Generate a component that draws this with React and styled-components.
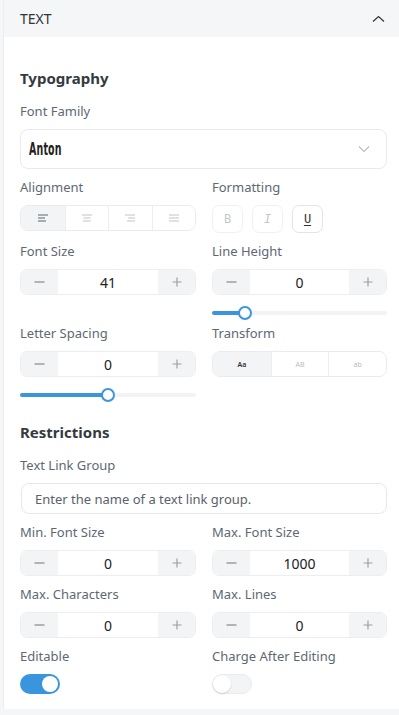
import React from "react";
import styled, { createGlobalStyle } from "styled-components";

const GlobalStyle = createGlobalStyle`
    * { box-sizing: border-box; }
    html, body {
        margin: 0;
        padding: 0;
        background: #f5f6f8;
        font-family: "Noto Sans", "Open Sans", sans-serif;
    }
`;

const Panel = styled.div`
    margin-left: 3px;
    width: 396px;
    border-left: 1px solid #eceef1;
    background: #fff;
`;

const Header = styled.div`
    height: 37px;
    padding: 0 14px 0 16px;
    display: flex;
    align-items: center;
    justify-content: space-between;
    background: #f4f6f8;
    font-size: 14px;
    color: #333;
    text-transform: uppercase;
`;

const Body = styled.div`
    padding: 31px 12px 15px 16px;
    display: flex;
    flex-direction: column;
`;

const SectionTitle = styled.h3`
    margin: ${(p) => p.$mt || 0}px 0 14px;
    font-size: 15px;
    line-height: 20px;
    font-weight: 700;
    color: #343a40;
`;

const Row = styled.div`
    display: grid;
    grid-template-columns: 176px 175px;
    column-gap: 16px;
    align-items: start;
    margin-top: ${(p) => p.$mt ?? 9}px;
`;

const Field = styled.div`
    display: flex;
    flex-direction: column;
    gap: 9px;
    margin-top: ${(p) => p.$mt ?? 0}px;
`;

const Label = styled.div`
    font-size: 13px;
    line-height: 18px;
    color: #5e6873;
`;

const Select = styled.div`
    height: 40px;
    border: 1px solid #e8eaed;
    border-radius: 8px;
    padding: 0 8px 0 8px;
    display: flex;
    align-items: center;
    justify-content: space-between;
`;

const AntonText = styled.span`
    display: inline-block;
    font-family: "DejaVu Sans Condensed", "DejaVu Sans", sans-serif;
    font-weight: 700;
    font-size: 17.5px;
    color: #222;
    transform: scaleX(0.6);
    transform-origin: left center;
    letter-spacing: 0.3px;
`;

const Segmented = styled.div`
    height: 26px;
    display: grid;
    grid-template-columns: repeat(${(p) => p.$count}, 1fr);
    border: 1px solid #e9ebee;
    border-radius: 8px;
    overflow: hidden;
`;

const Segment = styled.div`
    display: flex;
    align-items: center;
    justify-content: center;
    background: ${(p) => (p.$active ? "#f3f4f6" : "#fff")};
    border-left: ${(p) => (p.$first ? "none" : "1px solid #eceef1")};
    color: ${(p) => (p.$active ? "#333" : "#b8bdc2")};
    font-size: 7px;
    font-weight: ${(p) => (p.$active ? 600 : 400)};
`;

const FormatGroup = styled.div`
    display: flex;
    gap: 9px;
`;

const FormatButton = styled.div`
    width: 31px;
    height: 28px;
    border-radius: 7px;
    border: 1px solid ${(p) => (p.$active ? "#e2e5e8" : "#eff1f3")};
    display: flex;
    align-items: center;
    justify-content: center;
    font-family: "DejaVu Sans Mono", monospace;
    font-size: 12px;
    color: ${(p) => (p.$active ? "#333" : "#c4c8cc")};
    font-style: ${(p) => (p.$italic ? "oblique" : "normal")};
    text-decoration: ${(p) => (p.$underline ? "underline" : "none")};
    text-underline-offset: 2px;
`;

const Stepper = styled.div`
    height: 26px;
    display: grid;
    grid-template-columns: 37px 1fr 37px;
    border: 1px solid #eceef1;
    border-radius: 7px;
    overflow: hidden;
`;

const StepButton = styled.div`
    background: #f3f4f6;
    display: flex;
    align-items: center;
    justify-content: center;
`;

const StepValue = styled.div`
    display: flex;
    align-items: center;
    justify-content: center;
    font-size: 14px;
    color: #222;
    background: #fff;
`;

const Track = styled.div`
    position: relative;
    height: 4px;
    margin-top: 7px;
    border-radius: 2px;
    background: #f1f3f5;
`;

const Fill = styled.div`
    height: 100%;
    border-radius: 2px;
    background: #3a96dc;
`;

const Thumb = styled.div`
    position: absolute;
    top: 50%;
    width: 14px;
    height: 14px;
    margin: -7px 0 0 -7px;
    border-radius: 50%;
    background: #fff;
    border: 2px solid #3a96dc;
`;

const TextInput = styled.div`
    height: 31px;
    margin-left: 1px;
    border: 1px solid #e5e7ea;
    border-radius: 8px;
    padding: 0 13px;
    display: flex;
    align-items: center;
    font-size: 13px;
    color: #5a6169;
`;

const Toggle = styled.div`
    width: 40px;
    height: 20px;
    border-radius: 10px;
    padding: 2px;
    display: flex;
    justify-content: ${(p) => (p.$on ? "flex-end" : "flex-start")};
    background: ${(p) => (p.$on ? "#3a96dc" : "#f3f4f6")};
    border: ${(p) => (p.$on ? "none" : "1px solid #eaecef")};
`;

const Knob = styled.div`
    width: ${(p) => (p.$on ? 16 : 18)}px;
    height: ${(p) => (p.$on ? 16 : 18)}px;
    margin: ${(p) => (p.$on ? 0 : "-2px 0 0 -2px")};
    border-radius: 50%;
    background: #fff;
    box-shadow: ${(p) => (p.$on ? "none" : "0 1px 2px rgba(0,0,0,0.15)")};
`;

const ChevronUp = () => (
    <svg width="13" height="8" viewBox="0 0 13 8">
        <polyline points="1,6.5 6.5,1.5 12,6.5" fill="none" stroke="#333" strokeWidth="1.2" />
    </svg>
);

const ChevronDown = () => (
    <svg width="12" height="8" viewBox="0 0 12 8" style={{ marginRight: 8 }}>
        <polyline points="1,1.5 6,6.5 11,1.5" fill="none" stroke="#b8bec4" strokeWidth="1.2" />
    </svg>
);

const alignLines = {
    left: [[0, 10], [0, 7], [0, 8]],
    center: [[0, 10], [1.5, 8.5], [1, 9]],
    right: [[0, 10], [3, 10], [2, 10]],
    justify: [[0, 10], [0, 10], [0, 10]],
};

const AlignIcon = ({ type, active }) => (
    <svg width="10" height="8" viewBox="0 0 10 8">
        {alignLines[type].map(([a, b], i) => (
            <line
                key={i}
                x1={a}
                x2={b}
                y1={1 + i * 3}
                y2={1 + i * 3}
                stroke={active ? "#8c949a" : "#d3d8db"}
                strokeWidth="1.7"
            />
        ))}
    </svg>
);

const Minus = () => (
    <svg width="11" height="10" viewBox="0 0 11 10">
        <line x1="0.5" x2="10.5" y1="5" y2="5" stroke="#9a9fa5" strokeWidth="1.3" />
    </svg>
);

const Plus = () => (
    <svg width="10" height="10" viewBox="0 0 10 10">
        <line x1="0.5" x2="9.5" y1="5" y2="5" stroke="#9a9fa5" strokeWidth="1.2" />
        <line x1="5" x2="5" y1="0.5" y2="9.5" stroke="#9a9fa5" strokeWidth="1.2" />
    </svg>
);

const NumberStepper = ({ value }) => (
    <Stepper>
        <StepButton>
            <Minus />
        </StepButton>
        <StepValue>{value}</StepValue>
        <StepButton>
            <Plus />
        </StepButton>
    </Stepper>
);

const Slider = ({ percent }) => (
    <Track>
        <Fill style={{ width: `${percent}%` }} />
        <Thumb style={{ left: `${percent}%` }} />
    </Track>
);

const App = () => {
    return (
        <>
            <GlobalStyle />
            <Panel>
                <Header>
                    <span>Text</span>
                    <ChevronUp />
                </Header>
                <Body>
                    <SectionTitle>Typography</SectionTitle>
                    <Field>
                        <Label>Font Family</Label>
                        <Select>
                            <AntonText>Anton</AntonText>
                            <ChevronDown />
                        </Select>
                    </Field>
                    <Row>
                        <Field>
                            <Label>Alignment</Label>
                            <Segmented $count={4}>
                                {["left", "center", "right", "justify"].map((t, i) => (
                                    <Segment key={t} $active={i === 0} $first={i === 0}>
                                        <AlignIcon type={t} active={i === 0} />
                                    </Segment>
                                ))}
                            </Segmented>
                        </Field>
                        <Field>
                            <Label>Formatting</Label>
                            <FormatGroup>
                                <FormatButton>B</FormatButton>
                                <FormatButton $italic>I</FormatButton>
                                <FormatButton $active $underline>U</FormatButton>
                            </FormatGroup>
                        </Field>
                    </Row>
                    <Row>
                        <Field>
                            <Label>Font Size</Label>
                            <NumberStepper value="41" />
                        </Field>
                        <Field>
                            <Label>Line Height</Label>
                            <NumberStepper value="0" />
                            <Slider percent={19} />
                        </Field>
                    </Row>
                    <Row>
                        <Field>
                            <Label>Letter Spacing</Label>
                            <NumberStepper value="0" />
                            <Slider percent={50} />
                        </Field>
                        <Field>
                            <Label>Transform</Label>
                            <Segmented $count={3}>
                                <Segment $active $first>Aa</Segment>
                                <Segment>AB</Segment>
                                <Segment>ab</Segment>
                            </Segmented>
                        </Field>
                    </Row>

                    <SectionTitle $mt={25}>Restrictions</SectionTitle>
                    <Field>
                        <Label>Text Link Group</Label>
                        <TextInput>Enter the name of a text link group.</TextInput>
                    </Field>
                    <Row>
                        <Field>
                            <Label>Min. Font Size</Label>
                            <NumberStepper value="0" />
                        </Field>
                        <Field>
                            <Label>Max. Font Size</Label>
                            <NumberStepper value="1000" />
                        </Field>
                    </Row>
                    <Row>
                        <Field>
                            <Label>Max. Characters</Label>
                            <NumberStepper value="0" />
                        </Field>
                        <Field>
                            <Label>Max. Lines</Label>
                            <NumberStepper value="0" />
                        </Field>
                    </Row>
                    <Row>
                        <Field>
                            <Label>Editable</Label>
                            <Toggle $on>
                                <Knob $on />
                            </Toggle>
                        </Field>
                        <Field>
                            <Label>Charge After Editing</Label>
                            <Toggle>
                                <Knob />
                            </Toggle>
                        </Field>
                    </Row>
                </Body>
            </Panel>
        </>
    );
};

export default App;
